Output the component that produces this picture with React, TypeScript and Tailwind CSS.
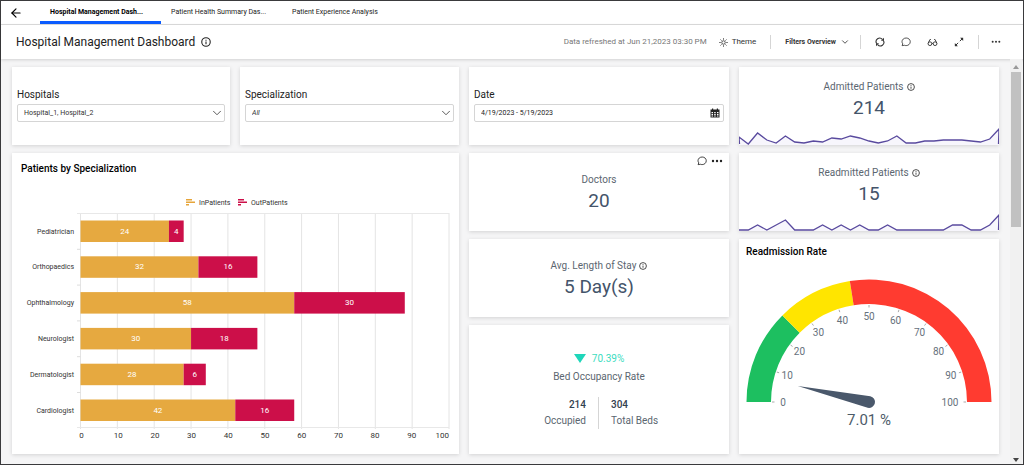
import { ReactNode } from "react";
import { LuArrowLeft, LuChevronDown } from "react-icons/lu";

const tabs = ["Hospital Management Dash...", "Patient Health Summary Das...", "Patient Experience Analysis"];

const specializations = [
  { name: "Pediatrician", inPatients: 24, outPatients: 4 },
  { name: "Orthopaedics", inPatients: 32, outPatients: 16 },
  { name: "Ophthalmology", inPatients: 58, outPatients: 30 },
  { name: "Neurologist", inPatients: 30, outPatients: 18 },
  { name: "Dermatologist", inPatients: 28, outPatients: 6 },
  { name: "Cardiologist", inPatients: 42, outPatients: 16 },
];

const admitted = [12, 19, 8, 15, 18, 11, 17, 18, 16, 17, 13, 14, 11, 13, 16, 18, 16, 11, 18, 18, 16, 16, 15, 15, 15, 16, 17, 14, 4];
const readmitted = [19, 19, 14, 19, 14, 9, 19, 19, 19, 14, 19, 14, 19, 14, 19, 19, 14, 19, 19, 19, 19, 19, 19, 14, 14, 19, 19, 14, 4];

const InfoIcon = ({ className }: { className: string }) => (
  <svg viewBox="0 0 12 12" className={className} fill="none" stroke="currentColor" strokeWidth="1.3" aria-hidden="true">
    <circle cx="6" cy="6" r="5.1" />
    <path d="M6 5.4v3.2M6 3.2v1.2" />
  </svg>
);

const CommentIcon = ({ className }: { className: string }) => (
  <svg viewBox="0 0 12 12" className={className} fill="none" stroke="currentColor" strokeWidth="1" aria-hidden="true">
    <path d="M6.2 1.2c2.8 0 4.9 1.9 4.9 4.5s-2.1 4.6-4.9 4.6c-.8 0-1.5-.1-2.2-.4l-2.7.5.8-2.2C1.5 7.5 1.2 6.7 1.2 5.7c0-2.6 2.2-4.5 5-4.5z" />
  </svg>
);

const DotsIcon = ({ className }: { className: string }) => (
  <svg viewBox="0 0 12 4" className={className} fill="currentColor" aria-hidden="true">
    <circle cx="2" cy="2" r="1.2" />
    <circle cx="6" cy="2" r="1.2" />
    <circle cx="10" cy="2" r="1.2" />
  </svg>
);

const ThemeIcon = () => (
  <svg viewBox="0 0 12 12" className="size-[9px]" fill="none" stroke="currentColor" strokeWidth="1.1" aria-hidden="true">
    <circle cx="6" cy="6" r="2.3" />
    <path d="M6 .3v2M6 9.7v2M.3 6h2M9.7 6h2M2 2l1.4 1.4M8.6 8.6L10 10M10 2L8.6 3.4M3.4 8.6L2 10" />
  </svg>
);

const RefreshIcon = () => (
  <svg viewBox="0 0 12 12" className="size-[10px]" fill="none" stroke="currentColor" strokeWidth="1.3" aria-hidden="true">
    <path d="M2 7.8A4.2 4.2 0 0 1 8.8 2.9M10 4.2A4.2 4.2 0 0 1 3.2 9.1" />
    <path d="M10.8.8v3.7H7.1zM1.2 11.2V7.5h3.7z" fill="currentColor" stroke="none" />
  </svg>
);

const GlassesIcon = () => (
  <svg viewBox="0 0 14 12" className="h-[9px] w-[11px]" fill="none" stroke="currentColor" strokeWidth="1.2" aria-hidden="true">
    <circle cx="3.6" cy="7.6" r="2.5" />
    <circle cx="10.4" cy="7.6" r="2.5" />
    <path d="M6.1 7.2h1.8M1.2 7L3.6 2h1.2M12.8 7l-2.4-5H9.2" />
  </svg>
);

const ExpandIcon = () => (
  <svg viewBox="0 0 12 12" className="size-[10px]" fill="none" stroke="currentColor" strokeWidth="1.2" aria-hidden="true">
    <path d="M7 5l3-3M5 7l-3 3" />
    <path d="M7.3 1H11v3.7zM4.7 11H1V7.3z" fill="currentColor" stroke="none" />
  </svg>
);

const CalendarIcon = ({ className }: { className: string }) => (
  <svg viewBox="0 0 10 10" className={className} fill="#222" aria-hidden="true">
    <path fillRule="evenodd" d="M.5 1.5h1.5V.5h1.2v1h3.6v-1H8v1h1.5v8h-9zM1.5 4v1.2h1.5V4zM4.2 4v1.2h1.5V4zM7 4v1.2h1.5V4zM1.5 5.9v1h1.5v-1zM4.2 5.9v1h1.5v-1zM7 5.9v1h1.5v-1zM1.5 7.6v1h1.5v-1zM4.2 7.6v1h1.5v-1zM7 7.6v1h1.5v-1z" />
  </svg>
);

const Card = ({ className = "", children }: { className?: string; children: ReactNode }) => (
  <section className={`bg-white shadow-[0_1px_4px_rgba(0,0,0,0.14)] ${className}`}>{children}</section>
);

const SelectFilter = ({ id, label, value, italic }: { id: string; label: string; value: string; italic?: boolean }) => (
  <Card className="flex flex-col justify-center px-[5px] pb-0.5">
    <label htmlFor={id} className="text-[10px] leading-[14px] mb-0.5 text-[#222]">{label}</label>
    <div className="relative">
      <select
        id={id}
        className={`block w-full h-[18px] appearance-none rounded-xs border border-[#d5d5d5] bg-white pl-1.5 text-[7px] text-[#333] ${italic ? "italic" : ""}`}
      >
        <option>{value}</option>
      </select>
      <LuChevronDown className="pointer-events-none absolute right-px top-0.5 size-3.5 text-[#444]" strokeWidth={1.5} />
    </div>
  </Card>
);

const Metric = ({ label, value, info }: { label: string; value: string; info?: boolean }) => (
  <div className="flex flex-col items-center text-[#44546a]">
    <h2 className="flex items-center gap-[3px] text-[10px] leading-4 text-[#5b6670]">
      {label}
      {info && <InfoIcon className="size-2 text-[#333]" />}
    </h2>
    <p className="text-[19px] leading-[26px]">{value}</p>
  </div>
);

const Sparkline = ({ data }: { data: number[] }) => {
  const step = 260 / (data.length - 1)
  const points = data.map((y, i) => `${i * step},${y}`).join(" ")

  return (
    <svg viewBox="0 0 260 20" preserveAspectRatio="none" className="block w-full h-5" aria-hidden="true">
      <polygon points={`0,20 ${points} 260,20`} fill="#f7f6fc" />
      <polyline points={`0.5,19 ${points} 259.5,19`} fill="none" stroke="#594a9e" strokeWidth="1.3" />
    </svg>
  )
}

const LegendMark = ({ x, color }: { x: number; color: string }) => (
  <path d={`M${x} 10h6v1.5h-6zM${x} 12.5h9v1.5h-9zM${x} 15h3v1.5h-3z`} fill={color} />
);

const BarChart = () => {
  const left = 68.5
  const unit = 3.685
  const ticks = [0, 10, 20, 30, 40, 50, 60, 70, 80, 90, 100]

  return (
    <svg viewBox="0 0 447 260" className="block w-full" fontSize="8" fill="#333" role="img" aria-label="Patients by Specialization">
      <LegendMark x={174} color="#e6a53a" />
      <text x="187" y="16" fontSize="7">InPatients</text>
      <LegendMark x={226} color="#cc0f49" />
      <text x="239" y="16" fontSize="7">OutPatients</text>

      {ticks.map((tick) => (
        <g key={tick}>
          <line x1={left + tick * unit} x2={left + tick * unit} y1="24" y2="240" stroke="#e4e4e4" />
          {/* the last label stays inside the plot */}
          <text x={tick === 100 ? 437 : left + 1 + tick * 3.67} y="249" textAnchor={tick === 100 ? "end" : "middle"}>{tick}</text>
        </g>
      ))}
      <path d="M65 24.5h372M65 238.5h372" stroke="#e8e8e8" />

      {specializations.map((row, i) => {
        const y = 31.5 + i * 35.8
        const inWidth = row.inPatients * unit
        const outWidth = row.outPatients * unit
        return (
          <g key={row.name}>
            {i > 0 && <line x1="65" x2={left} y1={y - 7} y2={y - 7} stroke="#ddd" />}
            <text x="62" y={y + 13} fontSize="7" textAnchor="end">{row.name}</text>
            <rect x={left} y={y} width={inWidth} height="21.5" fill="#e6a940" />
            <rect x={left + inWidth} y={y} width={outWidth} height="21.5" fill="#cc0f49" />
            <text x={left + inWidth / 2} y={y + 13} textAnchor="middle" fill="#fff">{row.inPatients}</text>
            <text x={left + inWidth + outWidth / 2} y={y + 13} textAnchor="middle" fill="#fff">{row.outPatients}</text>
          </g>
        )
      })}
    </svg>
  )
}

const gaugePoint = (value: number, radius: number) => {
  const angle = Math.PI * (1 - value / 100)
  return [130 + radius * Math.cos(angle), 139 - radius * Math.sin(angle)]
}

const gaugeArc = (from: number, to: number) => {
  const [a, b, c, d] = [gaugePoint(from, 122.5), gaugePoint(to, 122.5), gaugePoint(to, 98), gaugePoint(from, 98)]
  return `M${a}A122.5 122.5 0 0 1 ${b}L${c}A98 98 0 0 0 ${d}Z`
}

const Gauge = () => (
  <svg viewBox="0 0 260 190" className="block w-full" fill="#66717c" fontSize="10" role="img" aria-label="Readmission Rate 7.01 %">
    <path d={gaugeArc(0, 25)} fill="#1dbf60" />
    <path d={gaugeArc(25, 45)} fill="#ffe500" />
    <path d={gaugeArc(45, 100)} fill="#ff3b30" />
    {[0, 10, 20, 30, 40, 50, 60, 70, 80, 90, 100].map((tick) => {
      const [x1, y1] = gaugePoint(tick, 97)
      const [x2, y2] = gaugePoint(tick, 94.5)
      const [x, y] = gaugePoint(tick, tick === 100 ? 81 : 86)
      return (
        <g key={tick}>
          <line x1={x1} y1={y1} x2={x2} y2={y2} stroke="#aaa" />
          <text x={x} y={y + 3.5} textAnchor="middle">{tick}</text>
        </g>
      )
    })}
    <g transform="rotate(12.6 130 139)">
      <path d="M57 139L130 133A6 6 0 0 1 130 145Z" fill="#4a586b" />
    </g>
    <text x="130" y="162" fontSize="15" textAnchor="middle" fill="#4d5b69">7.01 %</text>
  </svg>
);

const Divider = () => <span className="h-3.5 w-px bg-[#d5d5d5]" />;

export default function App() {
  return (
    <div className="flex min-h-screen flex-col border border-[#3a3a3c] bg-[#f5f5f6] font-['Roboto',sans-serif] text-[#222]">
      <nav className="flex h-6 shrink-0 items-stretch border-b border-[#ddd] bg-white text-[7px] text-[#222]">
        <button aria-label="Back" className="w-[39px] pl-2">
          <LuArrowLeft className="size-3.5 text-black" />
        </button>
        {tabs.map((tab, i) => (
          <a
            key={tab}
            href="#"
            className={`flex w-[121px] items-center whitespace-nowrap border-b-3 px-2.5 pt-0.5 ${i === 0 ? "border-[#0b5cff] font-bold text-black" : "border-transparent"}`}
          >
            {tab}
          </a>
        ))}
      </nav>

      <header className="flex h-[34px] shrink-0 items-center bg-white pl-[15px] pr-[22px] shadow-[0_1px_3px_rgba(0,0,0,0.15)]">
        <h1 className="text-[12px]">Hospital Management Dashboard</h1>
        <InfoIcon className="ml-1.5 size-2.5" />
        <div className="ml-auto flex items-center text-[#333]">
          <span className="mr-3 text-[8px] text-[#777]">Data refreshed at Jun 21,2023 03:30 PM</span>
          <button className="mr-3.5 flex items-center gap-1 text-[8px]"><ThemeIcon />Theme</button>
          <Divider />
          <button className="ml-3.5 mr-2.5 flex items-center gap-1 text-[7px] font-bold">
            Filters Overview
            <LuChevronDown className="size-2.5" />
          </button>
          <Divider />
          <div className="mx-3.5 flex items-center gap-4">
            <button aria-label="Refresh"><RefreshIcon /></button>
            <button aria-label="Comments"><CommentIcon className="size-2.5" /></button>
            <button aria-label="View"><GlassesIcon /></button>
            <button aria-label="Full screen"><ExpandIcon /></button>
          </div>
          <Divider />
          <button aria-label="More" className="ml-3"><DotsIcon className="w-2.5" /></button>
        </div>
      </header>

      <div className="flex grow">
        <main className="grid min-w-0 flex-1 grid-cols-[218fr_219fr_260fr_260fr] grid-rows-[repeat(3,minmax(78px,auto))_minmax(129px,auto)] content-start gap-x-2.5 gap-y-2 px-[11px] pb-2 pt-2">
          <SelectFilter id="hospitals" label="Hospitals" value="Hospital_1, Hospital_2" />
          <SelectFilter id="specialization" label="Specialization" value="All" italic />
          <Card className="flex flex-col justify-center px-[5px] pb-0.5">
            <label htmlFor="date" className="text-[10px] leading-[14px] mb-0.5 text-[#222]">Date</label>
            <div className="relative">
              <input
                id="date"
                defaultValue="4/19/2023 - 5/19/2023"
                className="block w-full h-[18px] rounded-xs border border-[#d5d5d5] bg-white pl-1.5 text-[7px] text-[#222]"
              />
              <CalendarIcon className="pointer-events-none absolute right-1 top-1 size-2.5" />
            </div>
          </Card>
          <Card className="flex flex-col justify-between pt-3">
            <Metric label="Admitted Patients" value="214" info />
            <Sparkline data={admitted} />
          </Card>

          <Card className="col-span-2 row-span-3">
            <h2 className="pl-[9px] pt-2 text-[10px] leading-4 font-medium text-black">Patients by Specialization</h2>
            <div className="pt-3">
              <BarChart />
            </div>
          </Card>
          <Card className="relative flex flex-col justify-center pt-0.5">
            <Metric label="Doctors" value="20" />
            <div className="absolute right-1.5 top-[3px] flex items-center gap-1">
              <button aria-label="Comment on Doctors"><CommentIcon className="size-2.5" /></button>
              <button aria-label="Doctors options"><DotsIcon className="w-3" /></button>
            </div>
          </Card>
          <Card className="flex flex-col justify-between pt-3">
            <Metric label="Readmitted Patients" value="15" info />
            <Sparkline data={readmitted} />
          </Card>

          <Card className="flex flex-col justify-center pt-0.5">
            <Metric label="Avg. Length of Stay" value="5 Day(s)" info />
          </Card>
          <Card className="row-span-2">
            <h2 className="pl-[7px] pt-[5px] text-[10px] leading-4 font-medium text-black">Readmission Rate</h2>
            <div className="pt-[3px]">
              <Gauge />
            </div>
          </Card>

          <Card className="flex flex-col items-center justify-center text-[10px] leading-4 text-[#5b6670]">
            <p className="flex items-center gap-1.5 text-[#3ddcc0]">
              <svg viewBox="0 0 12 9" className="w-3" aria-hidden="true"><path d="M0 0h12L6 9z" fill="#1fd6ba" /></svg>
              70.39%
            </p>
            <h2 className="mt-0.5">Bed Occupancy Rate</h2>
            <dl className="mt-3 grid grid-cols-2">
              <div className="flex flex-col-reverse border-r border-[#d5d5d5] pr-3 text-right">
                <dt>Occupied</dt>
                <dd className="font-medium text-[#33414f]">214</dd>
              </div>
              <div className="flex flex-col-reverse pl-3">
                <dt>Total Beds</dt>
                <dd className="font-medium text-[#33414f]">304</dd>
              </div>
            </dl>
          </Card>
        </main>

        <div className="mr-px flex w-3 shrink-0 flex-col items-center bg-[#f1f1f1] pt-1.5 pb-0.5" aria-hidden="true">
          <svg viewBox="0 0 6 4" className="w-1.5"><path d="M0 4h6L3 0z" fill="#999" /></svg>
          <div className="mt-[3px] h-[155px] w-2.5 bg-[#c1c1c1]" />
          <svg viewBox="0 0 6 4" className="mt-auto w-1.5"><path d="M0 0h6L3 4z" fill="#444" /></svg>
        </div>
      </div>
    </div>
  );
}
